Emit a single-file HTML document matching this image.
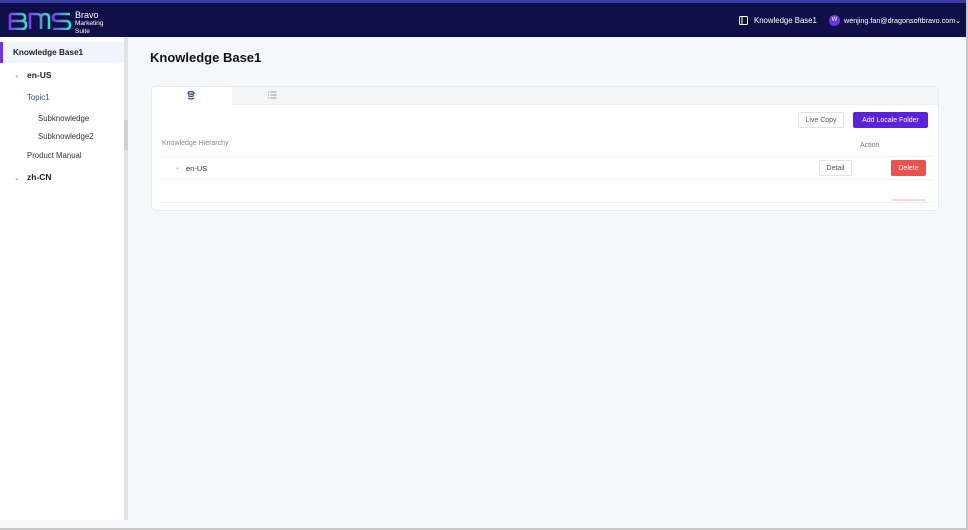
<!DOCTYPE html>
<html><head><style>
*{box-sizing:border-box;margin:0;padding:0}
body{width:968px;height:530px;overflow:hidden;font-family:"Liberation Sans",sans-serif;background:#c8c8c8;position:relative}
.frame{position:absolute;left:0;top:0;width:966px;height:528px;background:#f5f8fb;overflow:hidden}
.hdr{position:absolute;left:0;top:0;width:966px;height:37px;background:#0f1047;border-top:3px solid #3a3ca0}
.side{position:absolute;left:0;top:37px;width:124px;height:483px;background:#fff}
.sb{position:absolute;left:124px;top:37px;width:4px;height:483px;background:#e3e3e6}
.sb i{position:absolute;left:0;top:83px;width:4px;height:30px;background:#d0d0d4}
.t{position:absolute;font-size:7.8px;color:#333;white-space:nowrap}
.card{position:absolute;left:151px;top:86px;width:788px;height:125px;background:#fff;border:1px solid #e8ebf0;border-radius:5px;overflow:hidden}
.tabs{position:absolute;left:0;top:0;width:788px;height:18px;background:#f3f5f8;border-bottom:1px solid #eceef2}
.tab1{position:absolute;left:0;top:0;width:80px;height:19px;background:#fff}
.btn{position:absolute;font-size:7px;display:flex;align-items:center;justify-content:center;border-radius:2px}
</style></head><body>
<div class="frame">
<div class="hdr">
  <svg style="position:absolute;left:8px;top:9px" width="64" height="18" viewBox="0 0 64 18">
    <defs><linearGradient id="g" x1="0" x2="1"><stop offset="0" stop-color="#7a3cf0"/><stop offset="1" stop-color="#35e0c0"/></linearGradient></defs>
    <g fill="none" stroke="url(#g)" stroke-width="2.6">
      <path d="M2 2h11q4 0 4 3.5t-4 3.5H2M2 9h12q4 0 4 4t-4 4H2V2"/>
      <path d="M22 17V2h7q4 0 4 4v11M33 6q0-4 4-4t4 4v11"/>
      <path d="M62 2H49q-4 0-4 3.5t4 3.5h9q4 0 4 4t-4 4H45"/>
    </g></svg>
  <div style="position:absolute;left:75px;top:9px;color:#fff;font-size:9px;line-height:7px">Bravo<br><span style="font-size:6.5px">Marketing<br>Suite</span></div>
  <svg style="position:absolute;left:739px;top:13px" width="9" height="9" viewBox="0 0 9 9"><rect x="0.5" y="0.5" width="8" height="8" rx="1" fill="none" stroke="#fff"/><line x1="3" y1="0.5" x2="3" y2="8.5" stroke="#fff"/></svg>
  <div class="t" style="left:754px;top:13px;color:#fff">Knowledge Base1</div>
  <div style="position:absolute;left:829px;top:12px;width:11px;height:11px;border-radius:50%;background:#6a35e8;color:#fff;font-size:6px;text-align:center;line-height:11px">W</div>
  <div class="t" style="left:844px;top:13px;color:#fff;font-size:7.2px">wenjing.fan@dragonsoftbravo.com⌄</div>
</div>
<div class="side">
  <div style="position:absolute;left:0;top:5px;width:124px;height:21px;background:#f1f5fb;border-left:3px solid #6a35e8"></div>
  <div class="t" style="left:13px;top:11px;font-weight:bold;color:#222;font-size:8.2px">Knowledge Base1</div>
  <div class="t" style="left:14px;top:34px;color:#888;font-size:7px">⌄</div>
  <div class="t" style="left:27px;top:33px;font-weight:bold;color:#222;font-size:8.5px">en-US</div>
  <div class="t" style="left:27px;top:56px;color:#3a4a9a">Topic1</div>
  <div class="t" style="left:38px;top:77px">Subknowledge</div>
  <div class="t" style="left:38px;top:95px">Subknowledge2</div>
  <div class="t" style="left:27px;top:114px">Product Manual</div>
  <div class="t" style="left:14px;top:137px;color:#888;font-size:7px">⌄</div>
  <div class="t" style="left:27px;top:135px;font-weight:bold;color:#222;font-size:8.5px">zh-CN</div>
</div>
<div class="sb"><i></i></div>
<div class="t" style="left:150px;top:50px;font-size:13px;font-weight:bold;color:#111">Knowledge Base1</div>
<div class="card">
  <div class="tabs"><div class="tab1"></div>
  <svg style="position:absolute;left:35px;top:4px" width="8" height="9" viewBox="0 0 8 9"><g fill="none" stroke="#2a4d8a" stroke-width="1.3"><ellipse cx="4" cy="2" rx="3" ry="1.3"/><path d="M1 4.5 Q4 6.5 7 4.5M1 7 Q4 9 7 7"/></g></svg>
  <svg style="position:absolute;left:116px;top:4px" width="9" height="8" viewBox="0 0 9 8"><g stroke="#777" stroke-width="0.8"><path d="M0 1h1M0 4h1M0 7h1M2.5 1h6M2.5 4h6M2.5 7h6"/></g></svg>
  </div>
  <div class="btn" style="left:646px;top:25px;width:46px;height:16px;border:1px solid #e2e2e2;color:#555">Live Copy</div>
  <div class="btn" style="left:701px;top:25px;width:75px;height:16px;background:#5b23d8;color:#fff">Add Locale Folder</div>
  <div class="t" style="left:10px;top:53px;font-size:7px;color:#888">Knowledge Hierarchy</div>
  <div class="t" style="left:708px;top:55px;font-size:7px;color:#777">Action</div>
  <div style="position:absolute;left:8px;top:69px;width:772px;border-top:1px solid #f0f0f0"></div>
  <div class="t" style="left:23px;top:77px;font-size:6px;color:#999">⌄</div>
  <div class="t" style="left:34px;top:77px;font-size:7.5px">en-US</div>
  <div class="btn" style="left:667px;top:73px;width:33px;height:16px;border:1px solid #e2e2e2;color:#555">Detail</div>
  <div class="btn" style="left:739px;top:73px;width:35px;height:16px;background:#e8534e;color:#fff">Delete</div>
  <div style="position:absolute;left:8px;top:92px;width:772px;border-top:1px solid #f0f0f0"></div>
  <div style="position:absolute;left:8px;top:115px;width:772px;border-top:1px solid #f0f0f0"></div>
  <div style="position:absolute;left:740px;top:112px;width:34px;height:2px;background:#fbd7d6"></div>
</div>
</div>
</body></html>
